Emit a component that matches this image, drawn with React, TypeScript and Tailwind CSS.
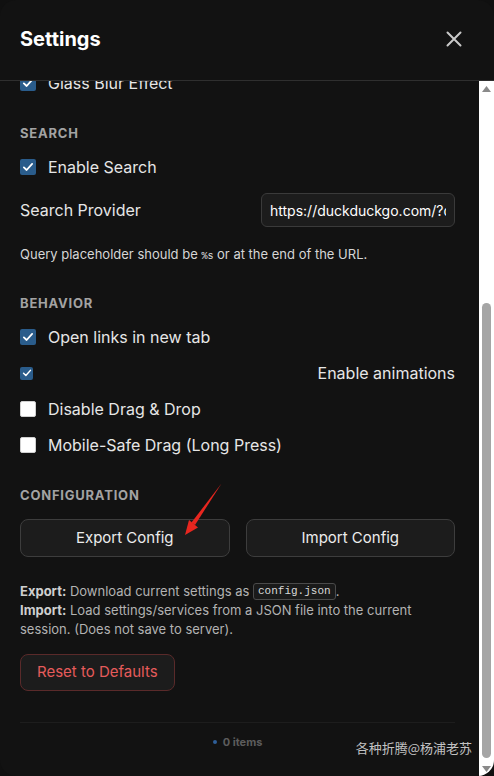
import React, { useLayoutEffect, useRef } from "react";

const FONT = { fontFamily: 'Inter, "Noto Sans", sans-serif' };

function Check({ on, small }: { on: boolean; small?: boolean }) {
  const size = small ? "w-[13px] h-[13px]" : "w-[16px] h-[16px]";
  if (!on) {
    return <span className={`${size} shrink-0 rounded-[2px] bg-white border border-[#cfcfcf]`} />;
  }
  return (
    <span className={`${size} shrink-0 rounded-[2px] bg-[#2a5c8b] flex items-center justify-center`}>
      <svg viewBox="0 0 16 16" className={small ? "w-[10px] h-[10px]" : "w-[12px] h-[12px]"}>
        <path d="M2.5 8.5 L6.2 12 L13.5 3.8" fill="none" stroke="#ffffff" strokeWidth="2.4" strokeLinecap="round" strokeLinejoin="round" />
      </svg>
    </span>
  );
}

function CheckRow({ label, on }: { label: string; on: boolean }) {
  return (
    <label className="h-[36px] flex items-center gap-3 text-[16px] text-[#e6e6e6]">
      <Check on={on} />
      <span>{label}</span>
    </label>
  );
}

function Heading({ children }: { children: React.ReactNode }) {
  return (
    <div className="h-[16px] leading-[16px] text-[13px] font-bold uppercase tracking-[0.06em] text-[#a3a3a3] mb-2">
      {children}
    </div>
  );
}

function SelectRow({ label, value }: { label: string; value: string }) {
  return (
    <div className="h-[36px] flex items-center justify-between text-[16px] text-[#e6e6e6]">
      <span>{label}</span>
      <span className="w-[194px] h-[32px] px-2 flex items-center rounded-[6px] border border-[#3a3a3a] bg-[#1c1c1c] text-[14px]">
        {value}
      </span>
    </div>
  );
}

function ScrollBar() {
  return (
    <div className="w-[15px] shrink-0 bg-white flex flex-col">
      <div className="h-[15px] flex items-center justify-center">
        <svg viewBox="0 0 9 6" className="w-[9px] h-[6px]">
          <polygon points="0,6 9,6 4.5,0" fill="#8a8a8a" />
        </svg>
      </div>
      <div className="flex-1 flex flex-col justify-end">
        <div className="mx-[3px] mb-[3px] h-[455px] rounded-full bg-[#a5a5a5]" />
      </div>
      <div className="h-[15px] flex items-center justify-center">
        <svg viewBox="0 0 9 6" className="w-[9px] h-[6px]">
          <polygon points="0,0 9,0 4.5,6" fill="#8a8a8a" />
        </svg>
      </div>
    </div>
  );
}

export default function App() {
  const ref = useRef<HTMLDivElement>(null);
  useLayoutEffect(() => {
    if (ref.current) ref.current.scrollTop = ref.current.scrollHeight;
  });
  return (
    <div className="relative w-[494px] h-[776px] bg-[#101010] overflow-hidden" style={FONT}>
      <div className="w-full h-full flex flex-col rounded-[16px] bg-[#121212] overflow-hidden">
        <header className="h-[81px] shrink-0 flex items-center justify-between pl-5 pr-6 pb-[3px] border-b border-[#2f2f2f]">
          <h1 className="text-[20px] leading-[28px] font-bold text-white">Settings</h1>
          <button className="p-2 text-[#c9c9c9]">
            <svg viewBox="0 0 16 16" className="w-[16px] h-[16px]">
              <path d="M1.5 1.5 L14.5 14.5 M14.5 1.5 L1.5 14.5" stroke="currentColor" strokeWidth="2" strokeLinecap="round" fill="none" />
            </svg>
          </button>
        </header>
        <div className="flex-1 min-h-0 flex">
          <div ref={ref} className="flex-1 min-w-0 overflow-y-auto [scrollbar-width:none]">
            <div className="pl-5 pr-6 pt-5 pb-[27px]">
              <section className="mb-6">
                <Heading>Appearance</Heading>
                <SelectRow label="Theme" value="Dark" />
                <SelectRow label="Accent Color" value="Blue" />
                <SelectRow label="Grid Columns" value="Auto" />
                <CheckRow label="Show Descriptions" on={true} />
                <CheckRow label="Compact Mode" on={false} />
                <CheckRow label="Show Status Dots" on={true} />
                <CheckRow label="Glass Blur Effect" on={true} />
              </section>

              <section className="mb-8">
                <Heading>Search</Heading>
                <CheckRow label="Enable Search" on={true} />
                <div className="mt-2 h-[34px] flex items-center justify-between text-[16px] text-[#e6e6e6]">
                  <span>Search Provider</span>
                  <input
                    readOnly
                    value="https://duckduckgo.com/?q=%s"
                    className="w-[194px] h-[34px] px-2 rounded-[6px] border border-[#3a3a3a] bg-[#1c1c1c] text-[14px] text-white outline-none"
                    style={FONT}
                  />
                </div>
                <p className="mt-[18px] text-[13px] leading-[18px] text-[#d6d6d6]">
                  Query placeholder should be{" "}
                  <code className="text-[10px] leading-none text-[#e0e0e0]" style={{ fontFamily: '"Liberation Mono", monospace' }}>%s</code>{" "}
                  or at the end of the URL.
                </p>
              </section>

              <section className="mb-6">
                <Heading>Behavior</Heading>
                <CheckRow label="Open links in new tab" on={true} />
                <div className="h-[36px] flex items-center justify-between text-[16px] text-[#e6e6e6]">
                  <Check on={true} small />
                  <span>Enable animations</span>
                </div>
                <CheckRow label="Disable Drag & Drop" on={false} />
                <CheckRow label="Mobile-Safe Drag (Long Press)" on={false} />
              </section>

              <section>
                <Heading>Configuration</Heading>
                <div className="mt-4 grid grid-cols-2 gap-4">
                  <button className="h-[38px] rounded-[8px] border border-[#3d3d3d] bg-[#1c1c1c] text-[15px] text-[#ececec]">
                    Export Config
                  </button>
                  <button className="h-[38px] rounded-[8px] border border-[#3d3d3d] bg-[#1c1c1c] text-[15px] text-[#ececec]">
                    Import Config
                  </button>
                </div>
                <div className="mt-[25px] text-[13px] leading-[19px] text-[#b3b3b3]">
                  <div>
                    <b className="font-bold text-[#cfcfcf]">Export:</b> Download current settings as{" "}
                    <code
                      className="inline-block align-middle leading-[15px] px-[4px] rounded-[3px] border border-[#4a4a4a] bg-[#1a1a1a] text-[11px] text-[#d8d8d8] -mt-[2px]"
                      style={{ fontFamily: '"Liberation Mono", monospace' }}
                    >
                      config.json
                    </code>
                    .
                  </div>
                  <div>
                    <b className="font-bold text-[#cfcfcf]">Import:</b> Load settings/services from a JSON file into the current session. (Does not save to server).
                  </div>
                </div>
                <div className="mt-[15px] flex">
                  <button className="h-[37px] px-4 rounded-[8px] border border-[#5a2a2a] bg-[#1c1c1c] text-[15px] text-[#e55b5b]">
                    Reset to Defaults
                  </button>
                </div>
              </section>

              <footer className="mt-[31px] pt-3 border-t border-[#1d1d1d] flex items-center justify-center gap-[6px] text-[11px] leading-[14px] font-bold text-[#5c5c5c]">
                <span className="w-[4px] h-[4px] rounded-full bg-[#2f5f99]" />
                <span>0 items</span>
              </footer>
            </div>
          </div>
          <ScrollBar />
        </div>
      </div>

      <svg className="absolute left-[180px] top-[480px] w-[45px] h-[60px]" viewBox="0 0 45 60">
        <polygon points="41.5,3.5 15,45 11.5,42.5" fill="#e8261f" />
        <polygon points="5,55 18,47.5 9,40" fill="#e8261f" />
      </svg>

      <div
        className="absolute right-[22px] top-[739px] text-[13px] leading-[18px] text-[#c2c2c2]"
        style={{ fontFamily: '"Noto Sans CJK SC", sans-serif' }}
      >
        各种折腾@杨浦老苏
      </div>
    </div>
  );
}
